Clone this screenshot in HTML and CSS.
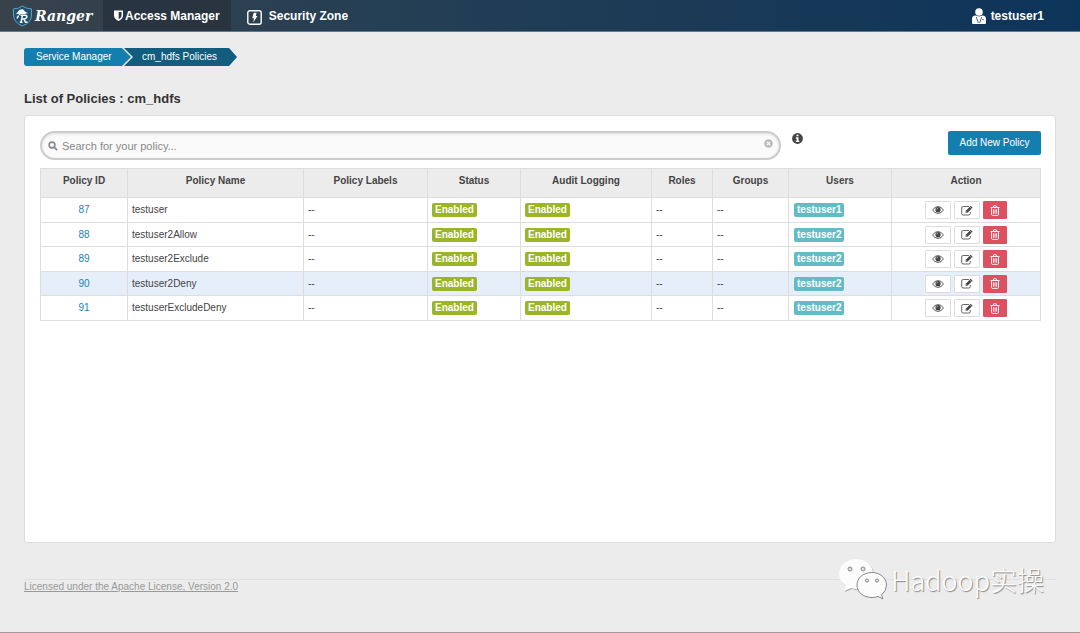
FILE: index.html
```html
<!DOCTYPE html>
<html lang="en">
<head>
<meta charset="utf-8">
<title>Ranger</title>
<link rel="stylesheet" href="styles.css">
</head>
<body>
<svg class="sprite" aria-hidden="true">
  <symbol id="eye" viewBox="0 0 12 8"><path d="M.5 4Q3 .6 6 .6T11.500 4Q9 7.400 6 7.400T.5 4Z" fill="none" stroke="#444" stroke-width=".9"/><circle cx="6" cy="3.700" r="2.600" fill="#444"/><path d="M4.700 3.400Q4.800 2.300 5.900 2.200" fill="none" stroke="#fff" stroke-width=".6"/></symbol>
  <symbol id="edit" viewBox="0 0 12 11"><path d="M8 1.500H2.200Q.7 1.500 .7 3V8.500Q.7 10 2.200 10H7.800Q9.300 10 9.300 8.500V7" fill="none" stroke="#555" stroke-width=".9"/><path d="M4.600 7.800V5.900L9.700 .8 11.600 2.700 6.500 7.800Z" fill="#444"/><path d="M8.600 1.700 10.700 3.800" stroke="#fff" stroke-width=".5"/><path d="M5 6.400 5.900 7.300" stroke="#fff" stroke-width=".7"/></symbol>
  <symbol id="trash" viewBox="0 0 10 11"><path d="M.5 2.500H9.500M3.200 2.300 3.700 .8H6.300L6.800 2.300M1.500 2.700V9.200Q1.500 10.400 2.600 10.400H7.400Q8.500 10.400 8.500 9.200V2.700M3.400 4.300V8.700M5 4.300V8.700M6.600 4.300V8.700" fill="none" stroke="#fff" stroke-width=".9"/></symbol>
</svg>
<header class="topbar">
  <a class="brand" href="#">
    <svg width="21" height="22" viewBox="0 0 21 22" aria-hidden="true"><path d="M10.500 1Q14.500 4 19.500 3.800V10Q19.500 17.500 10.500 21 1.500 17.500 1.500 10V3.800Q6.500 4 10.500 1Z" fill="#20506f" stroke="#5f9fbe" stroke-width="1"/><path d="M4 9 6 6.500Q7.500 3.800 11 4.300L13.500 7 16 8 13 9H9L7 10.500 6.500 8.700Z" fill="#f4f7f9"/><path d="M6.500 10.500 5 13.500M9 17.300 10.500 10.200H13Q15.300 10.400 14.800 12.300 14.300 14 12 13.900H10.300M12 14 13.500 17.300H15.500M7.800 17.300H10.500M8.500 10.200H12" fill="none" stroke="#fff" stroke-width="1.500"/></svg>
    <span>Ranger</span>
  </a>
  <nav class="nav">
    <a class="nav-item active" href="#"><svg width="9" height="11" viewBox="0 0 9 11" aria-hidden="true"><path d="M0 .5H9V6Q8.500 9 4.500 11 .5 9 0 6Z" fill="#fff"/><path d="M4.700 2H7.500V6Q7.200 7.800 4.700 9.200Z" fill="#283540"/></svg>Access Manager</a>
    <a class="nav-item zone" href="#"><svg width="15" height="15" viewBox="0 0 15 15" aria-hidden="true"><rect x=".8" y=".8" width="13.400" height="13.400" rx="2" fill="none" stroke="#fff" stroke-width="1.400"/><path d="M6.700 2.700H9.600L8.800 6H10.500L6.200 12.400 7 8.200H5.200Z" fill="#fff"/></svg>Security Zone</a>
  </nav>
  <a class="user" href="#"><svg width="14" height="16" viewBox="0 0 14 16" aria-hidden="true"><circle cx="7" cy="4" r="3.800" fill="#fff"/><path d="M0 15V11Q0 8 3.500 7.600L7 8.500 10.500 7.600Q14 8 14 11V15Q14 16 13 16H1Q0 16 0 15Z" fill="#fff"/><path d="M4.300 9 6.300 15M9.700 9 7.700 15" stroke="#173e5d" stroke-width=".8"/><path d="M10 11.500H12" stroke="#173e5d" stroke-width=".6"/></svg>testuser1</a>
</header>
<main class="page">
  <nav class="crumbs" aria-label="Breadcrumb">
    <a class="crumb first" href="#">Service Manager</a>
    <a class="crumb last" href="#">cm_hdfs Policies</a>
  </nav>
  <h1 class="title">List of Policies : cm_hdfs</h1>
  <section class="panel">
    <div class="tools">
      <div class="search">
        <svg width="10" height="10" viewBox="0 0 10 10" aria-hidden="true"><circle cx="4" cy="4" r="2.900" fill="none" stroke="#888" stroke-width="1.600"/><path d="M6.300 6.300 9.200 9.200" stroke="#888" stroke-width="1.800"/></svg>
        <input type="text" placeholder="Search for your policy..." aria-label="Search for your policy">
        <button class="clear" type="button" aria-label="Clear"><svg width="9" height="9" viewBox="0 0 9 9"><circle cx="4.500" cy="4.500" r="4.300" fill="#bbb"/><path d="M2.900 2.900 6.100 6.100M6.100 2.900 2.900 6.100" stroke="#fff" stroke-width="1.100"/></svg></button>
      </div>
      <button class="info" type="button" aria-label="Information"><svg width="11" height="11" viewBox="0 0 11 11"><circle cx="5.500" cy="5.500" r="5.400" fill="#444"/><path d="M4.500 1.700H6.500V3.300H4.500ZM3.800 4.300H6.500V7.800H7.300V9H3.800V7.800H4.600V5.400H3.800Z" fill="#fff"/></svg></button>
      <button class="add" type="button">Add New Policy</button>
    </div>
    <table class="grid">
      <colgroup><col class="c-id"><col class="c-name"><col class="c-labels"><col class="c-status"><col class="c-audit"><col class="c-roles"><col class="c-groups"><col class="c-users"><col class="c-action"></colgroup>
      <thead><tr><th>Policy ID</th><th>Policy Name</th><th>Policy Labels</th><th>Status</th><th>Audit Logging</th><th>Roles</th><th>Groups</th><th>Users</th><th>Action</th></tr></thead>
      <tbody>
        <tr><td class="id"><a href="#">87</a></td><td>testuser</td><td>--</td><td><span class="tag on">Enabled</span></td><td><span class="tag on">Enabled</span></td><td>--</td><td>--</td><td><span class="tag who">testuser1</span></td><td><div class="acts"><button type="button" aria-label="View"><svg width="12" height="8"><use href="#eye"/></svg></button><button type="button" aria-label="Edit"><svg width="12" height="11"><use href="#edit"/></svg></button><button class="del" type="button" aria-label="Delete"><svg width="10" height="11"><use href="#trash"/></svg></button></div></td></tr>
        <tr><td class="id"><a href="#">88</a></td><td>testuser2Allow</td><td>--</td><td><span class="tag on">Enabled</span></td><td><span class="tag on">Enabled</span></td><td>--</td><td>--</td><td><span class="tag who">testuser2</span></td><td><div class="acts"><button type="button" aria-label="View"><svg width="12" height="8"><use href="#eye"/></svg></button><button type="button" aria-label="Edit"><svg width="12" height="11"><use href="#edit"/></svg></button><button class="del" type="button" aria-label="Delete"><svg width="10" height="11"><use href="#trash"/></svg></button></div></td></tr>
        <tr><td class="id"><a href="#">89</a></td><td>testuser2Exclude</td><td>--</td><td><span class="tag on">Enabled</span></td><td><span class="tag on">Enabled</span></td><td>--</td><td>--</td><td><span class="tag who">testuser2</span></td><td><div class="acts"><button type="button" aria-label="View"><svg width="12" height="8"><use href="#eye"/></svg></button><button type="button" aria-label="Edit"><svg width="12" height="11"><use href="#edit"/></svg></button><button class="del" type="button" aria-label="Delete"><svg width="10" height="11"><use href="#trash"/></svg></button></div></td></tr>
        <tr class="hover"><td class="id"><a href="#">90</a></td><td>testuser2Deny</td><td>--</td><td><span class="tag on">Enabled</span></td><td><span class="tag on">Enabled</span></td><td>--</td><td>--</td><td><span class="tag who">testuser2</span></td><td><div class="acts"><button type="button" aria-label="View"><svg width="12" height="8"><use href="#eye"/></svg></button><button type="button" aria-label="Edit"><svg width="12" height="11"><use href="#edit"/></svg></button><button class="del" type="button" aria-label="Delete"><svg width="10" height="11"><use href="#trash"/></svg></button></div></td></tr>
        <tr><td class="id"><a href="#">91</a></td><td>testuserExcludeDeny</td><td>--</td><td><span class="tag on">Enabled</span></td><td><span class="tag on">Enabled</span></td><td>--</td><td>--</td><td><span class="tag who">testuser2</span></td><td><div class="acts"><button type="button" aria-label="View"><svg width="12" height="8"><use href="#eye"/></svg></button><button type="button" aria-label="Edit"><svg width="12" height="11"><use href="#edit"/></svg></button><button class="del" type="button" aria-label="Delete"><svg width="10" height="11"><use href="#trash"/></svg></button></div></td></tr>
      </tbody>
    </table>
  </section>
</main>
<footer class="footer"><a href="#">Licensed under the Apache License, Version 2.0</a></footer>
<div class="watermark">
  <svg width="50" height="43" viewBox="0 0 50 43" aria-hidden="true"><g fill="#aaa" transform="translate(.8 1)"><path id="big" d="M18 1C8 1 1 8 1 16Q1 23 8 28L6 33 13 30Q17 31.500 21 31C36 30 38 15 32 7Q27 1 18 1Z"/></g><path d="M18 1C8 1 1 8 1 16Q1 23 8 28L6 33 13 30Q17 31.500 21 31C36 30 38 15 32 7Q27 1 18 1Z" fill="#fcfcfc"/><path d="M34 14.500C25 14.500 19 20 19 27S25 39.500 34 39.500Q37 39.500 40 38.500L45 41 43.500 37Q48.500 33 48.500 27C48.500 20 42 14.500 34 14.500Z" fill="#fcfcfc" stroke="#888" stroke-width="1"/><g fill="#e0e0e0" stroke="#888" stroke-width="1"><circle cx="12" cy="11" r="2"/><circle cx="25" cy="11" r="2"/><circle cx="29" cy="22.500" r="1.600"/><circle cx="39" cy="22.500" r="1.600"/></g></svg>
  <span>Hadoop实操</span>
</div>
</body>
</html>
```
FILE: styles.css
```css
* { box-sizing: border-box; }
body {
  margin: 0;
  min-height: 100vh;
  position: relative;
  display: flex;
  flex-direction: column;
  background: #ececec;
  border-bottom: 1px solid #a09a9d;
  color: #444;
  font: 10px/16px "Liberation Sans", Arial, sans-serif;
}
a { color: inherit; text-decoration: none; }
button { font: inherit; padding: 0; cursor: pointer; }
.sprite { display: none; }

.topbar {
  display: flex;
  height: 32px;
  background: linear-gradient(to right, #38424b, #253f54 35%, #0d345a);
  border-bottom: 1px solid #5d7b92;
  color: #fff;
  font-size: 12px;
  font-weight: bold;
}
.brand {
  display: flex;
  align-items: center;
  width: 103px;
  padding-left: 12px;
  gap: 2px;
  font: italic bold 14px/30px "DejaVu Serif", serif;
}
.nav { display: flex; }
.nav-item { display: flex; align-items: center; padding: 0 11px; gap: 2px; }
.active { background: #283540; }
.zone { padding-left: 16px; gap: 7px; }
.zone svg { margin-top: 4px; }
.user { display: flex; align-items: center; gap: 5px; margin-left: auto; padding-right: 36px; }

.page { flex: 1; display: flex; flex-direction: column; padding: 16px 24px 0; }
.crumbs { display: flex; height: 18px; color: #fff; line-height: 18px; }
.crumb { padding: 0 20px 0 12px; }
.first {
  width: 107px;
  padding-right: 0;
  background: #147fae;
  border-radius: 3px 0 0 3px;
  clip-path: polygon(0 0, calc(100% - 9px) 0, 100% 50%, calc(100% - 9px) 100%, 0 100%);
}
.last {
  margin-left: -7px;
  padding-left: 18px;
  background: #125c7e;
  clip-path: polygon(0 0, calc(100% - 8px) 0, 100% 50%, calc(100% - 8px) 100%, 0 100%, 9px 50%);
}
.title { margin: 24px 0 7px; font-size: 13px; line-height: 18px; color: #333; }
.panel {
  flex: 1;
  padding: 15px 14px 16px 15px;
  background: #fff;
  border: 1px solid #ddd;
  border-radius: 3px;
}
.tools { display: flex; align-items: flex-start; padding-bottom: 8px; }
.search {
  display: flex;
  align-items: center;
  flex: 0 1 741px;
  height: 29px;
  padding: 0 6px;
  gap: 4px;
  border: 2px solid #ccc;
  border-radius: 15px;
  background: #fafafa;
  box-shadow: inset 0 1px 3px #ddd;
}
.search input {
  flex: 1;
  min-width: 0;
  padding: 0;
  border: 0;
  outline: 0;
  background: transparent;
  font: 11px/16px "Liberation Sans", Arial, sans-serif;
}
.search input::placeholder { color: #888; opacity: 1; }
.clear, .info { display: flex; border: 0; background: transparent; }
.clear { padding: 0 0 4px; }
.info { margin: 2px 0 0 11px; }
.add {
  width: 93px;
  height: 24px;
  margin-left: auto;
  border: 0;
  border-radius: 2px;
  background: #147fae;
  color: #fff;
}

.grid { width: 100%; table-layout: fixed; border-collapse: collapse; }
.c-id { width: 8.7%; }
.c-name { width: 17.6%; }
.c-labels { width: 12.4%; }
.c-status { width: 9.3%; }
.c-audit { width: 13.1%; }
.c-roles { width: 6.1%; }
.c-groups { width: 7.6%; }
.c-users { width: 10.3%; }
.c-action { width: 14.9%; }
.grid th, .grid td { border: 1px solid #ddd; padding: 0 4px; text-align: left; }
.grid th { height: 29px; padding-bottom: 5px; background: #ececec; text-align: center; }
.grid td { height: 24px; }
.grid tr:nth-child(odd) td { height: 25px; }
.grid .id { text-align: center; color: #2382b0; }
.hover { background: #e6eefa; }
.tag {
  display: block;
  width: fit-content;
  padding: 0 3px;
  border-radius: 2px;
  color: #fff;
  font-size: 10px;
  font-weight: bold;
  line-height: 14px;
}
.on { background: #9ab526; }
.who { margin-left: 1px; background: #63bcc5; }
.acts { display: flex; justify-content: center; gap: 3px; }
.acts button {
  display: flex;
  align-items: center;
  justify-content: center;
  width: 26px;
  height: 18px;
  border: 1px solid #ddd;
  border-radius: 1px;
  background: #fff;
}
.acts .del { width: 24px; border-color: #dc5060; background: #dc5060; }

.footer { margin: 36px 24px 38px; border-top: 1px solid #e0e0e0; color: #999; line-height: 14px; }
.footer a { text-decoration: underline; }
.watermark {
  position: absolute;
  right: 36px;
  bottom: 31px;
  display: flex;
  align-items: center;
  gap: 3px;
  color: #fff;
  font: 300 27px/36px "Noto Sans CJK SC", sans-serif;
  text-shadow: 1px 1px 1px #888;
}
```
